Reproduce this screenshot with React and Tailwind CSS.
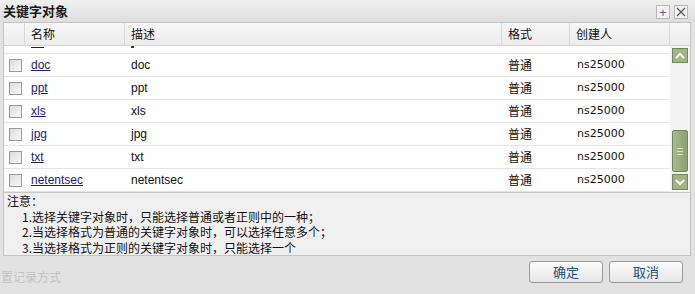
import React from "react";

const rows = [
  { name: "doc", desc: "doc" },
  { name: "ppt", desc: "ppt" },
  { name: "xls", desc: "xls" },
  { name: "jpg", desc: "jpg" },
  { name: "txt", desc: "txt" },
  { name: "netentsec", desc: "netentsec" },
];

const cjk = "font-['SimSun','Noto_Sans_CJK_SC',sans-serif]";

function Checkbox() {
  return (
    <span className="block w-[13px] h-[13px] border border-[#9a9a9a] bg-gradient-to-br from-[#dcdcdc] to-[#f8f8f8]" />
  );
}

function ScrollBar() {
  return (
    <div className="w-[20px] flex flex-col items-center bg-[#f4f4f4] py-[2px]">
      <div className="w-[16px] h-[15px] bg-[#9fb386] border border-[#6f8a55] flex items-center justify-center">
        <svg width="10" height="7" viewBox="0 0 10 7">
          <path d="M1 6 L5 2 L9 6" stroke="#fff" strokeWidth="2" fill="none" />
        </svg>
      </div>
      <div className="flex-1" />
      <div className="w-[16px] h-[42px] rounded-[2px] bg-gradient-to-r from-[#a8bb90] to-[#8aa070] border border-[#6f8a55] flex flex-col items-center justify-center gap-[2px]">
        <span className="block w-[6px] h-px bg-[#d6e2c8]" />
        <span className="block w-[6px] h-px bg-[#d6e2c8]" />
        <span className="block w-[6px] h-px bg-[#d6e2c8]" />
      </div>
      <div className="mt-[2px] w-[16px] h-[16px] bg-[#9fb386] border border-[#6f8a55] flex items-center justify-center">
        <svg width="10" height="7" viewBox="0 0 10 7">
          <path d="M1 1 L5 5 L9 1" stroke="#fff" strokeWidth="2" fill="none" />
        </svg>
      </div>
    </div>
  );
}

export default function App() {
  return (
    <div className="w-[695px] h-[294px] bg-[#e2e2e2] flex flex-col overflow-hidden text-[12px] text-[#111]">
      {/* title bar */}
      <div className="h-[22px] shrink-0 flex items-center justify-between pl-[3px] pr-[7px] bg-gradient-to-b from-[#efefef] to-[#dedede]">
        <span className={`${cjk} font-bold text-[13px] text-[#1a1a1a]`}>关键字对象</span>
        <div className="flex gap-[4px] mt-[2px]">
          <span className="w-[14px] h-[14px] border border-[#b8b8b8] bg-[#f2f2f2] flex items-center justify-center text-[#666] text-[13px] leading-none">+</span>
          <span className="w-[14px] h-[14px] border border-[#b8b8b8] bg-[#f2f2f2] flex items-center justify-center">
            <svg width="10" height="10" viewBox="0 0 10 10">
              <path d="M1 1 L9 9 M9 1 L1 9" stroke="#555" strokeWidth="1.2" />
            </svg>
          </span>
        </div>
      </div>

      {/* panel */}
      <div className="ml-[3px] mr-[4px] border border-[#c4c4c4] flex flex-col bg-white">
        {/* header */}
        <div className={`${cjk} h-[23px] flex bg-gradient-to-b from-[#f7f7f7] to-[#ececec] border-b border-[#d4d4d4] text-[12px]`}>
          <div className="w-[21px] border-r border-[#d8d8d8]" />
          <div className="w-[100px] pl-[6px] flex items-center border-r border-[#d8d8d8]">名称</div>
          <div className="flex-1 pl-[6px] flex items-center border-r border-[#d8d8d8]">描述</div>
          <div className="w-[68px] pl-[6px] flex items-center border-r border-[#d8d8d8]">格式</div>
          <div className="w-[100px] pl-[6px] flex items-center border-r border-[#d8d8d8]">创建人</div>
          <div className="w-[20px]" />
        </div>

        {/* body */}
        <div className="h-[146px] flex overflow-hidden">
          <div className="flex-1 overflow-hidden">
            {/* row scrolled mostly out of view: only the bottoms of its glyphs show */}
            <div className="h-[8px] flex border-b border-[#e4e4e4]">
              <div className="w-[21px]" />
              <div className="w-[100px] pl-[6px]">
                <span className="block mt-[1px] w-[13px] h-px bg-[#1c1c6a]" />
              </div>
              <div className="flex-1 pl-[6px]">
                <span className="block w-[3px] h-[2px] bg-[#333]" />
              </div>
            </div>
            {rows.map((r, i) => (
              <div key={i} className="h-[23px] flex items-center border-b border-[#e4e4e4]">
                <div className="w-[21px] pl-[5px] flex items-center"><Checkbox /></div>
                <div className="w-[100px] pl-[6px] font-['Liberation_Sans',sans-serif] text-[#1c1c6a] underline">{r.name}</div>
                <div className="flex-1 pl-[6px] font-['Liberation_Sans',sans-serif]">{r.desc}</div>
                <div className={`w-[68px] pl-[6px] ${cjk}`}>普通</div>
                <div className="w-[100px] pl-[7px] font-['DejaVu_Sans',sans-serif] text-[11px]">ns25000</div>
              </div>
            ))}
          </div>
          <ScrollBar />
        </div>

        {/* notes */}
        <div className={`${cjk} h-[63px] border-t border-[#c8c8c8] bg-[#f0f0f0] px-[3px] text-[12px] leading-[15.5px] text-[#111]`}>
          <div>注意：</div>
          <div className="pl-[15px]">1.选择关键字对象时，只能选择普通或者正则中的一种；</div>
          <div className="pl-[15px]">2.当选择格式为普通的关键字对象时，可以选择任意多个；</div>
          <div className="pl-[15px]">3.当选择格式为正则的关键字对象时，只能选择一个</div>
        </div>
      </div>

      {/* footer */}
      <div className="flex-1 flex justify-between pt-[5px] pr-[12px]">
        <div className={`${cjk} text-[#c2c2c2] text-[12px] pt-[7px] pl-[1px]`}>置记录方式</div>
        <div className={`${cjk} flex gap-[6px]`}>
          <button className="w-[74px] h-[22px] rounded-[3px] border border-[#9a9a9a] bg-gradient-to-b from-[#fbfbfb] to-[#e6e6e6] text-[#1d4f80] text-[13px]">确定</button>
          <button className="w-[74px] h-[22px] rounded-[3px] border border-[#9a9a9a] bg-gradient-to-b from-[#fbfbfb] to-[#e6e6e6] text-[#1d4f80] text-[13px]">取消</button>
        </div>
      </div>
    </div>
  );
}
